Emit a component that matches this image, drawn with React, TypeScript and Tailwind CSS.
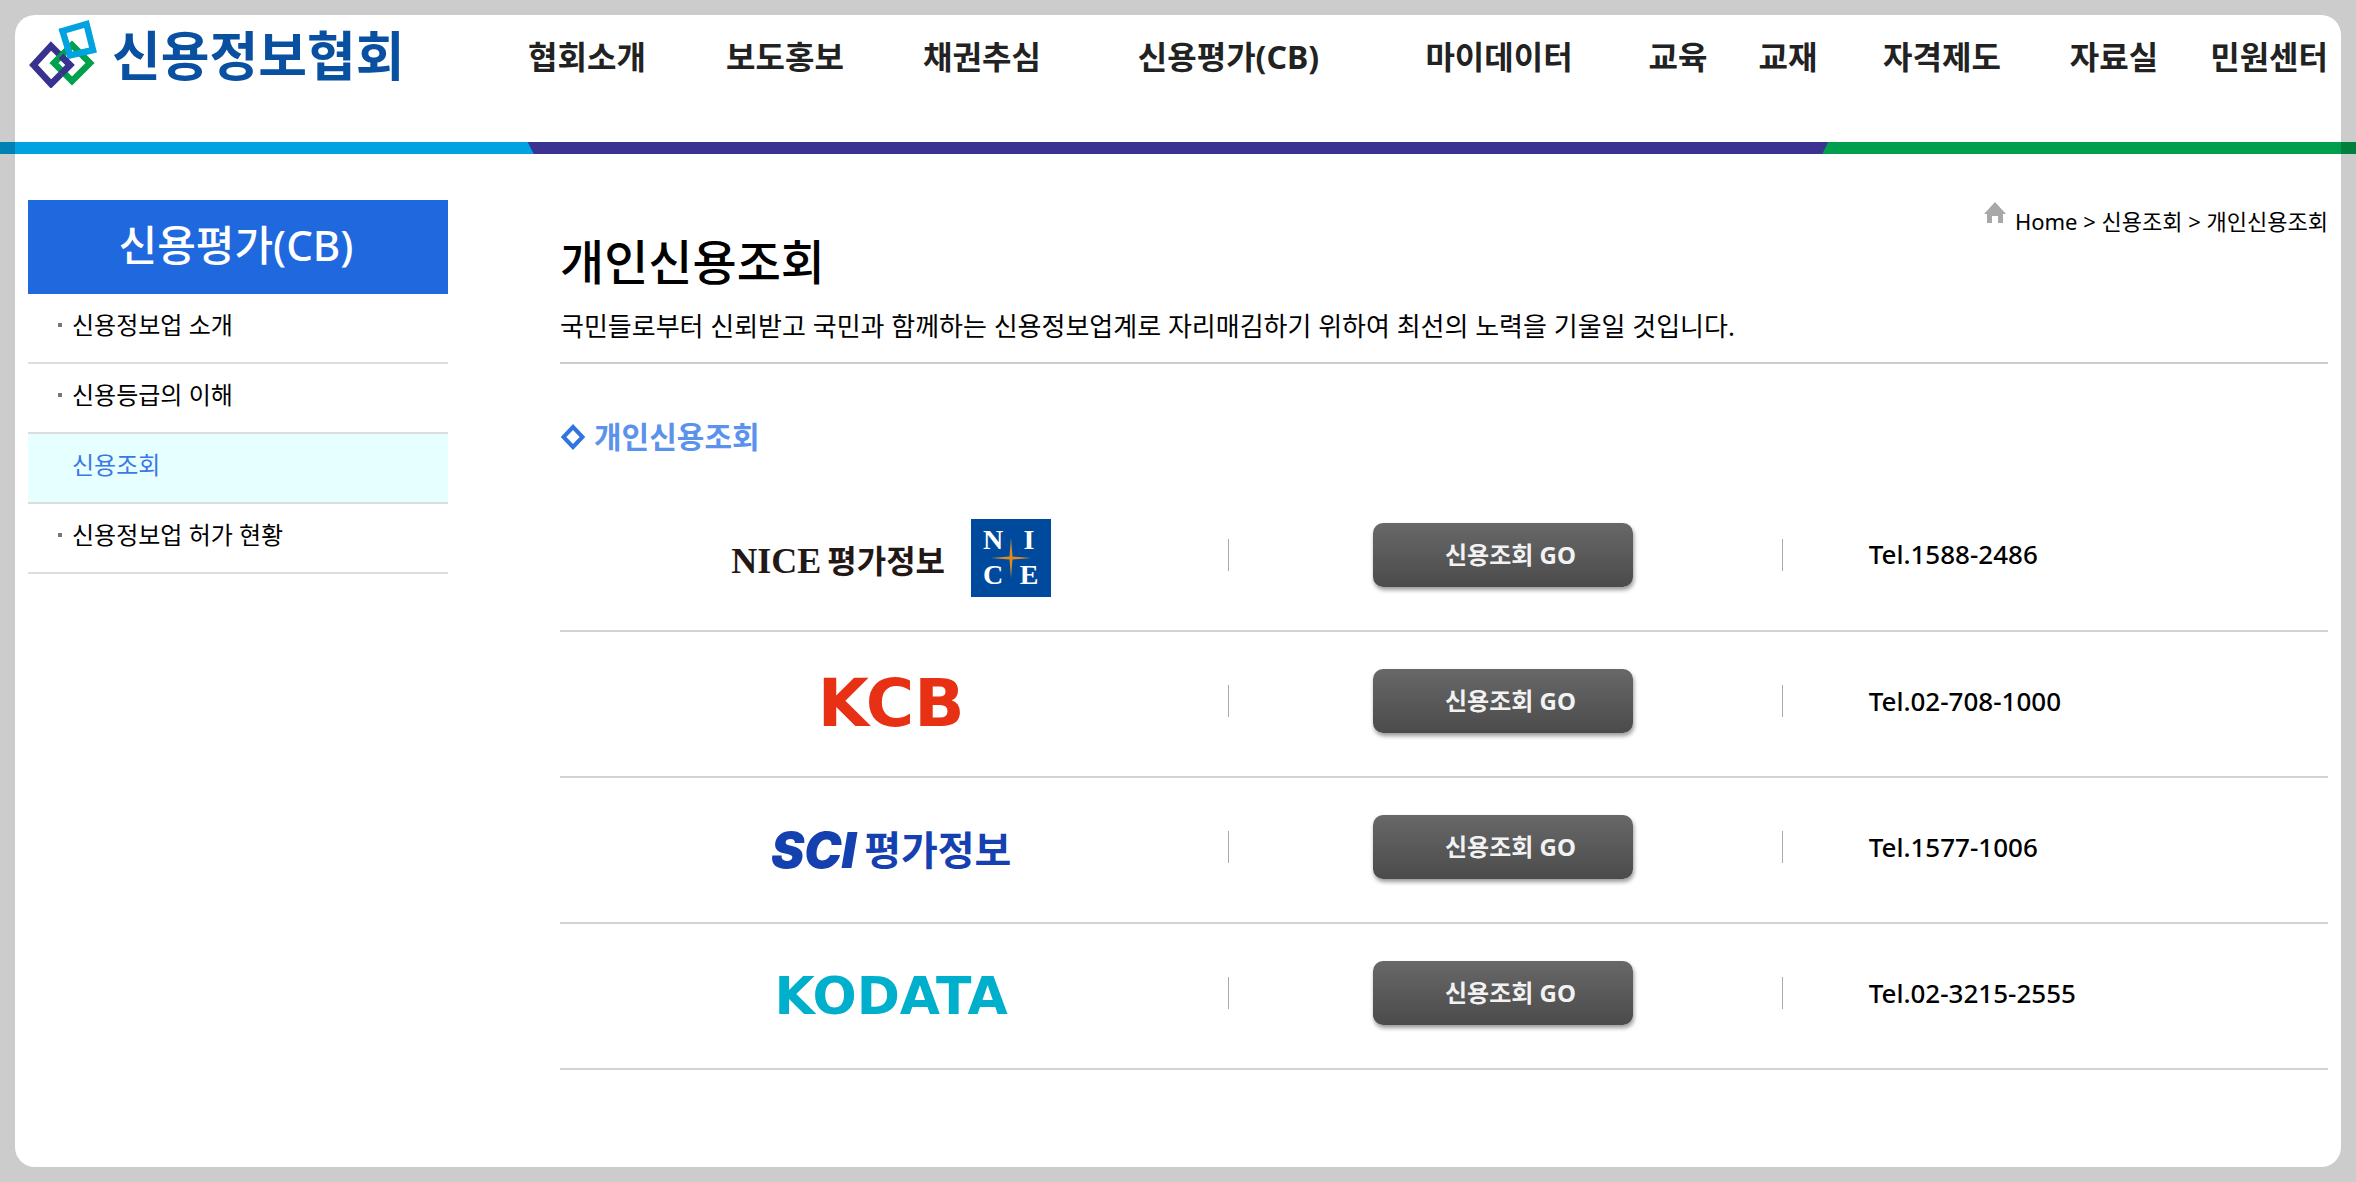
import type { ReactNode } from 'react';

const menus = ['협회소개', '보도홍보', '채권추심', '신용평가(CB)', '마이데이터', '교육', '교재', '자격제도', '자료실', '민원센터'];

const sideMenus = [
  { name: '신용정보업 소개', active: false },
  { name: '신용등급의 이해', active: false },
  { name: '신용조회', active: true },
  { name: '신용정보업 허가 현황', active: false },
];

const agencies: { id: string; logo: ReactNode; tel: string }[] = [
  { id: 'nice', logo: <NiceLogo />, tel: '1588-2486' },
  { id: 'kcb', logo: <span className="font-['DejaVu_Sans'] text-[66px] leading-none font-bold text-[#e83015]">KCB</span>, tel: '02-708-1000' },
  { id: 'sci', logo: <SciLogo />, tel: '1577-1006' },
  { id: 'kodata', logo: <span className="font-['DejaVu_Sans'] text-[52px] leading-none font-bold text-[#00afcb]">KODATA</span>, tel: '02-3215-2555' },
];

export default function App() {
  return (
    <div className="relative min-h-screen overflow-hidden bg-white font-['Noto_Sans','Noto_Sans_CJK_KR',sans-serif] text-black">
      <Header />
      <ColorBar />
      <div className="flex items-start gap-28 px-7 pt-[46px] pb-20">
        <SideMenu />
        <main className="min-w-0 flex-1">
          <PageTitle />
          <h2 className="mt-[50px] flex items-center gap-2 text-[30px] leading-[46px] font-bold text-[#5b93ec]">
            <svg width="26" height="28" viewBox="0 0 26 28" fill="none" stroke="#2f74e0" strokeWidth="4">
              <path d="M13 4 22.5 14 13 24 3.5 14Z" />
            </svg>
            개인신용조회
          </h2>
          <AgencyTable />
        </main>
      </div>

      {/* Dimmed frame around the page */}
      <div className="pointer-events-none absolute inset-[15px] rounded-[20px] shadow-[0_0_0_40px_rgba(0,0,0,0.2)]" />
    </div>
  );
}

function Header() {
  return (
    <header className="flex h-[142px] items-start px-7">
      <a href="#" className="flex w-[460px] shrink-0 items-center gap-3.5 pt-[18px]">
        <svg width="70" height="70" viewBox="0 0 70 70" fill="none" strokeWidth="6.5">
          <path d="M23 28 42 47 23 66 5.500 47Z" stroke="#37318f" />
          <path d="M44 27 62 45 44 63 26 45Z" stroke="#00a04c" />
          <path d="M34.500 13 58.500 6 65 32 42 37.500Z" stroke="#00a3e0" />
          <path d="M33 38 42 47 33 56" stroke="#37318f" />
        </svg>
        <span className="pt-1 text-[53px] leading-none font-bold whitespace-nowrap text-[#0a50a1]">신용정보협회</span>
      </a>
      <nav className="min-w-0 flex-1 pt-[34px]">
        <ul className="grid grid-cols-[198fr_198fr_196fr_297fr_244fr_114fr_106fr_202fr_142fr_143fr] text-center text-[32px] leading-[46px] font-bold whitespace-nowrap text-[#222]">
          {menus.map((menu) => (
            <li key={menu} className="last:text-right">
              <a href="#">{menu}</a>
            </li>
          ))}
        </ul>
      </nav>
    </header>
  );
}

function ColorBar() {
  return (
    <div className="h-3 bg-[linear-gradient(to_right,#00a2e0_50%,#009f4d_50%)]">
      <div className="mx-[22.4%] h-full bg-[#3a3392] [clip-path:polygon(0_0,100%_0,calc(100%-6px)_100%,6px_100%)]" />
    </div>
  );
}

function SideMenu() {
  return (
    <aside className="w-[420px] shrink-0">
      <h2 className="bg-[#2068de] pr-1 pb-1 text-center text-[42px] leading-[90px] font-medium text-white">신용평가(CB)</h2>
      <ul>
        {sideMenus.map((menu) => (
          <li key={menu.name} className={`border-b-2 border-[#ddd] ${menu.active ? 'bg-[#e6ffff]' : ''}`}>
            <a href="#" className={`flex items-center gap-2.5 pb-1.5 pl-[30px] text-[24px] leading-[62px] ${menu.active ? 'text-[#3b78e7]' : ''}`}>
              <span className={`size-1 ${menu.active ? '' : 'bg-[#777]'}`} />
              {menu.name}
            </a>
          </li>
        ))}
      </ul>
    </aside>
  );
}

function PageTitle() {
  return (
    <div className="border-b-2 border-[#ccc] pb-4">
      <div className="flex items-start justify-between">
        <h1 className="pt-7 text-[48px] leading-[68px] font-medium">개인신용조회</h1>
        <div className="flex items-start gap-2 text-[22px] leading-[42px]">
          <svg width="24" height="24" viewBox="0 0 24 24" fill="#a8a8a8">
            <path d="M12 2 23 14H20V23H15V16H9V23H4V14H1Z" />
          </svg>
          <p>
            <a href="#">Home</a> &gt; <a href="#">신용조회</a> &gt; <a href="#">개인신용조회</a>
          </p>
        </div>
      </div>
      <p className="pt-2.5 text-[26px] leading-10">
        국민들로부터 신뢰받고 국민과 함께하는 신용정보업계로 자리매김하기 위하여 최선의 노력을 기울일 것입니다.
      </p>
    </div>
  );
}

function AgencyTable() {
  return (
    <table className="mt-[25px] w-full table-fixed border-collapse">
      <colgroup>
        <col className="w-[37.8%]" />
        <col className="w-[31.3%]" />
        <col />
      </colgroup>
      <tbody>
        {agencies.map((agency) => (
          <tr key={agency.id} className="h-[146px] border-b-2 border-[#d3d3d3]">
            <td>
              <div className="flex items-center justify-center pr-1.5">{agency.logo}</div>
            </td>
            <td className="pb-1.5">
              <div className="flex items-center">
                <Divider />
                <div className="flex-1 pr-1 text-center">
                  <button className="h-16 w-[260px] rounded-[10px] bg-linear-to-b from-[#686868] to-[#4b4b4b] pl-3.5 text-[24px] font-bold text-[#f2f2f2] shadow-[1px_3px_4px_rgba(0,0,0,0.4)]">
                    신용조회 GO
                  </button>
                </div>
              </div>
            </td>
            <td className="pb-1.5">
              <div className="flex items-center gap-[86px] text-[26px] font-medium">
                <Divider />
                <span>Tel.{agency.tel}</span>
              </div>
            </td>
          </tr>
        ))}
      </tbody>
    </table>
  );
}

function Divider() {
  return <span className="h-8 w-px bg-[#aaa]" />;
}

function NiceLogo() {
  return (
    <div className="flex items-center gap-[26px] text-[#231815]">
      <div className="flex items-center gap-1.5 pt-1.5">
        <span className="font-['Liberation_Serif'] text-[36px] leading-none font-bold">NICE</span>
        <span className="text-[32px] leading-none font-bold">평가정보</span>
      </div>
      <div className="relative grid h-[78px] w-20 grid-cols-2 place-items-center bg-[#004a9e] px-1 py-1 font-['Liberation_Serif'] text-[28px] leading-none font-bold text-white">
        <span>N</span>
        <span>I</span>
        <span>C</span>
        <span>E</span>
        <svg width="40" height="40" viewBox="0 0 40 40" className="absolute top-[19px] left-5">
          <path d="M20 0 21.500 18.500 40 20 21.500 21.500 20 40 18.500 21.500 0 20 18.500 18.500Z" fill="#e08a1e" />
        </svg>
      </div>
    </div>
  );
}

function SciLogo() {
  return (
    <div className="flex items-center gap-2 text-[#1440b0]">
      <span className="font-['Inter'] text-[50px] leading-none font-black italic">SCI</span>
      <span className="text-[40px] leading-none font-bold">평가정보</span>
    </div>
  );
}
